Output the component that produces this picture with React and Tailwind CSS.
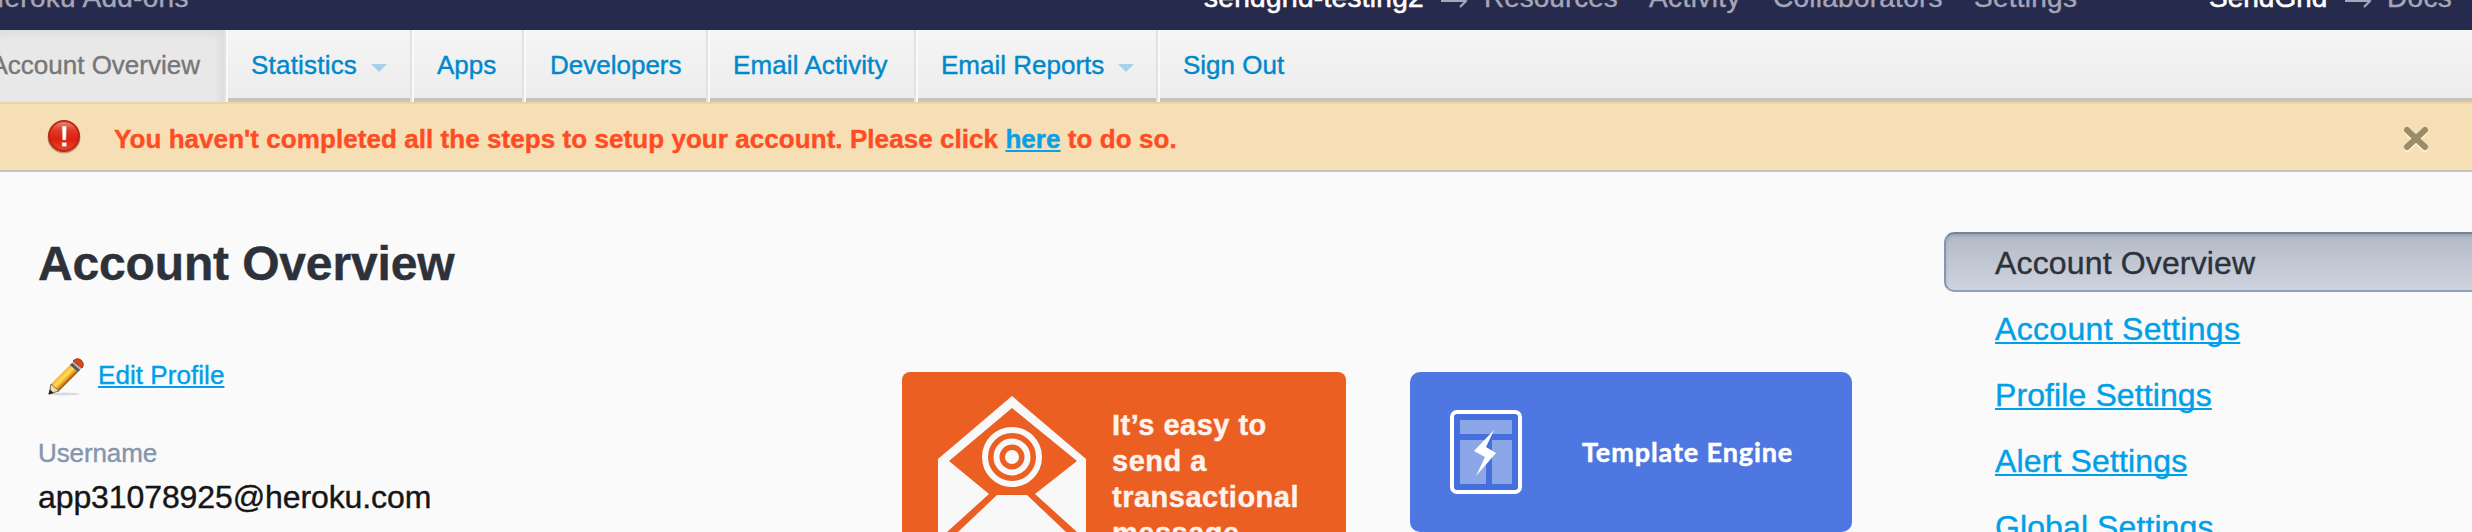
const sep = "w-1 h-[72px] shrink-0 border-l-2 border-[#e2e2e2] bg-[#fafafa]";
const underlined = "underline decoration-2 underline-offset-2 [text-decoration-skip-ink:none]";

function Tab({ label, width, caret, text = "" }) {
  return (
    <a className={`flex h-[72px] shrink-0 items-start border-b-2 border-[#d9c4a1] ${width}`}>
      <span className="flex h-[70px] w-full items-start border-b-2 border-[#c3c3c3] pt-5 pl-[23px] leading-[30px]">
        <span className={text}>{label}</span>
        {caret && (
          <svg className="mt-[14px] ml-[14px] h-2 w-4" viewBox="0 0 16 8">
            <path d="M0 0h16L8 8z" fill="#a5d1e9" />
          </svg>
        )}
      </span>
    </a>
  );
}

function Arrow({ className }) {
  return (
    <span className={`shrink-0 ${className}`}>
      <svg className="mt-[11px] h-4 w-7" viewBox="0 0 28 16" fill="none" stroke="#a5a6b7" strokeWidth="2.200">
        <path d="M1 8h25M20 2l6 6-6 6" />
      </svg>
    </span>
  );
}

function TopBar() {
  return (
    <header className="flex h-[30px] items-start overflow-hidden bg-[#262a4c] text-[28px] leading-8 whitespace-nowrap text-[#a5a6b7]">
      <div className="-mt-[18px] flex w-full">
        <span className="-ml-4 w-[1220px] shrink-0 tracking-[0.28px]">Heroku Add-ons</span>
        <span className="w-[236px] shrink-0 tracking-[0.3px] text-white [-webkit-text-stroke:0.6px_white]">sendgrid-testing2</span>
        <Arrow className="w-[44px]" />
        <span className="w-[165px] shrink-0">Resources</span>
        <span className="w-[124px] shrink-0 tracking-[0.4px]">Activity</span>
        <span className="w-[201px] shrink-0 tracking-[0.25px]">Collaborators</span>
        <span className="w-[235px] shrink-0 tracking-[0.25px]">Settings</span>
        <span className="w-[135px] shrink-0 text-white [-webkit-text-stroke:0.6px_white]">SendGrid</span>
        <Arrow className="w-[43px]" />
        <span className="tracking-[0.3px]">Docs</span>
      </div>
    </header>
  );
}

function Nav() {
  return (
    <nav className="flex h-[72px] bg-linear-to-b from-[#f5f5f5] to-[#ececec] text-[26px] whitespace-nowrap text-[#0088cc]">
      <a className="flex h-[72px] w-56 shrink-0 justify-end bg-[#e8e8e8] pt-5 pr-6 leading-[30px] text-[#777] shadow-[inset_-4px_4px_8px_rgba(0,0,0,0.05)]">
        Account Overview
      </a>
      <i className={sep} />
      <Tab label="Statistics" width="w-[182px]" text="tracking-[0.2px]" caret />
      <i className={sep} />
      <Tab label="Apps" width="w-[108px]" />
      <i className={sep} />
      <Tab label="Developers" width="w-[180px]" text="pl-px" />
      <i className={sep} />
      <Tab label="Email Activity" width="w-[204px]" text="tracking-[0.1px]" />
      <i className={sep} />
      <Tab label="Email Reports" width="w-[238px]" caret />
      <i className={sep} />
      <Tab label="Sign Out" width="grow" />
    </nav>
  );
}

function Alert() {
  return (
    <section className="flex h-[70px] items-start border-t-2 border-b-2 border-t-[#ebd4ab] border-b-[#c4c4c4] bg-[#f6dfb4] whitespace-nowrap">
      <svg className="mt-3 ml-[46px] h-10 w-9 shrink-0" viewBox="0 0 36 40">
        <defs>
          <linearGradient id="al" x1="0" y1="0" x2="0" y2="1">
            <stop offset="0" stopColor="#f58a70" />
            <stop offset="0.3" stopColor="#e23a26" />
            <stop offset="0.6" stopColor="#dc2010" />
            <stop offset="1" stopColor="#f5441e" />
          </linearGradient>
        </defs>
        <ellipse cx="18" cy="21.500" rx="16.500" ry="16" fill="#7a4a30" opacity="0.45" />
        <circle cx="18" cy="20" r="15" fill="url(#al)" stroke="#b8281a" strokeWidth="2" />
        <path d="M16 10h4.500l-.5 14h-3.500zM16 26.500h4.500v4H16z" fill="#fff" stroke="#b9897f" strokeWidth="0.500" />
      </svg>
      <p className="ml-8 pt-[20px] text-[26px] leading-[30px] font-bold tracking-[0.06px] text-[#ff4c24]">
        You haven't completed all the steps to setup your account. Please click{" "}
        <a className={`text-[#0a9fe6] ${underlined}`}>here</a> to do so.
      </p>
      <svg className="mt-[22px] mr-[43px] ml-auto h-[27px] w-[26px]" viewBox="0 0 26 27" strokeWidth="6" strokeLinecap="round">
        <path d="M4 6l18 17M22 6L4 23" stroke="#fdf3dc" />
        <path d="M4 4l18 17M22 4L4 21" stroke="#9c8b68" />
      </svg>
    </section>
  );
}

function Pencil() {
  return (
    <svg className="h-10 w-10 shrink-0" viewBox="0 0 40 40">
      <defs>
        <linearGradient id="pb" gradientUnits="userSpaceOnUse" x1="15" y1="15" x2="24" y2="24">
          <stop offset="0" stopColor="#c87a1c" />
          <stop offset="0.2" stopColor="#f8b52c" />
          <stop offset="0.5" stopColor="#ffe05a" />
          <stop offset="0.75" stopColor="#f0a020" />
          <stop offset="1" stopColor="#8a4a10" />
        </linearGradient>
      </defs>
      <ellipse cx="19" cy="37" rx="16" ry="1.500" fill="#000" opacity="0.12" />
      <path d="M6 27L25 8l8 7-19 19z" fill="url(#pb)" />
      <path d="M6 27l8 7-10 3z" fill="#ecdcae" stroke="#7a6a48" strokeWidth="1" />
      <path d="M3.500 37.500l1.500-5 3.500 3.500z" fill="#222" />
      <path d="M25 8l4-4 8 7-4 4z" fill="#b5b5b5" />
      <path d="M25 8l2-2 8 7-2 2z" fill="#555" />
      <path d="M28 4q4-4 8-1 4 4 1 8z" fill="#d9481e" stroke="#b03412" />
    </svg>
  );
}

function SendCard() {
  return (
    <div className="flex h-[300px] w-[444px] rounded-lg bg-[#eb5f22]">
      <svg className="mt-6 ml-9 h-[136px] w-[148px] shrink-0" viewBox="0 0 148 136">
        <path d="M74 0l74 63v73H0V63z" fill="#f8f8f8" />
        <path d="M74 12l65 53-42 33 42 38H9l42-38L11 65z" fill="#eb5f22" />
        <path d="M59 99h30l39 37H20z" fill="#f8f8f8" />
        <circle cx="74" cy="61" r="27" fill="none" stroke="#f8f8f8" strokeWidth="6" />
        <circle cx="74" cy="61" r="15.500" fill="none" stroke="#f8f8f8" strokeWidth="6" />
        <circle cx="74" cy="61" r="7" fill="#f8f8f8" />
      </svg>
      <p className="pt-[35px] pl-[26px] text-[29px] leading-9 font-bold tracking-[0.5px] text-[#fdf3ee]">
        It’s easy to
        <br />
        send a
        <br />
        transactional
        <br />
        message
      </p>
    </div>
  );
}

function TemplateCard() {
  return (
    <div className="flex h-40 w-[442px] items-start rounded-[10px] bg-[#4e77e1]">
      <svg className="mt-[37px] ml-[39px] h-[86px] w-[74px] shrink-0" viewBox="0 0 74 86">
        <rect x="3" y="3" width="68" height="80" rx="5" fill="#466fde" stroke="#fff" strokeWidth="4" />
        <path d="M11 11h52v14H11zM11 31h26v44H11zM43 31h20v44H43z" fill="#8ba7e8" />
        <path d="M45 21L25 42l11 6-9 19 20-23-10-6z" fill="#fff" />
      </svg>
      <span className="mt-[64px] ml-[59px] font-[Lato] text-[27px] leading-8 font-bold tracking-[0.9px] whitespace-nowrap text-white [-webkit-text-stroke:0.5px_white]">
        Template Engine
      </span>
    </div>
  );
}

function Sidebar() {
  return (
    <aside className="mt-[60px] ml-[92px] w-[540px] shrink-0 text-[32px] leading-9">
      <div className="h-[60px] rounded-l-[10px] border-y-2 border-l-2 border-t-[#74839a] border-b-[#8fa0b8] border-l-[#8496b0] bg-linear-to-b from-[#b3bac7] to-[#cdd4de] pt-[11px] pl-[49px] tracking-[0.15px] text-[#2d323a] shadow-[inset_0_2px_3px_rgba(80,90,110,0.25)]">
        Account Overview
      </div>
      <div className="flex flex-col items-start gap-[30px] pt-[19px] pl-[51px] text-[#009fe8]">
        <a className={`tracking-[0.32px] ${underlined}`}>Account Settings</a>
        <a className={`tracking-[0.1px] ${underlined}`}>Profile Settings</a>
        <a className={`tracking-[0.14px] ${underlined}`}>Alert Settings</a>
        <a className={`tracking-[0.1px] ${underlined}`}>Global Settings</a>
      </div>
    </aside>
  );
}

export default function App() {
  return (
    <div className="h-[532px] w-[2472px] overflow-hidden bg-[#fafafa] font-['Liberation_Sans',Arial,sans-serif] [-webkit-text-stroke:0.4px]">
      <TopBar />
      <Nav />
      <Alert />
      <main className="flex">
        <section className="w-[864px] shrink-0 pl-[38px]">
          <h1 className="mt-[64px] text-[48px] leading-[56px] font-bold tracking-[-0.15px] text-[#2c313a]">Account Overview</h1>
          <div className="mt-[65px] flex items-start pl-[7px]">
            <Pencil />
            <a className={`mt-[3px] ml-[13px] text-[26px] leading-[30px] tracking-[0.06px] text-[#009fe8] ${underlined}`}>Edit Profile</a>
          </div>
          <div className="mt-[41px] text-[26px] leading-[30px] tracking-[-0.1px] text-[#8496ad]">Username</div>
          <div className="mt-[11px] text-[32px] leading-9 tracking-[-0.1px] text-[#151515]">app31078925@heroku.com</div>
        </section>
        <div className="flex shrink-0 items-start gap-16 pt-[200px] pl-[38px]">
          <SendCard />
          <TemplateCard />
        </div>
        <Sidebar />
      </main>
    </div>
  );
}
